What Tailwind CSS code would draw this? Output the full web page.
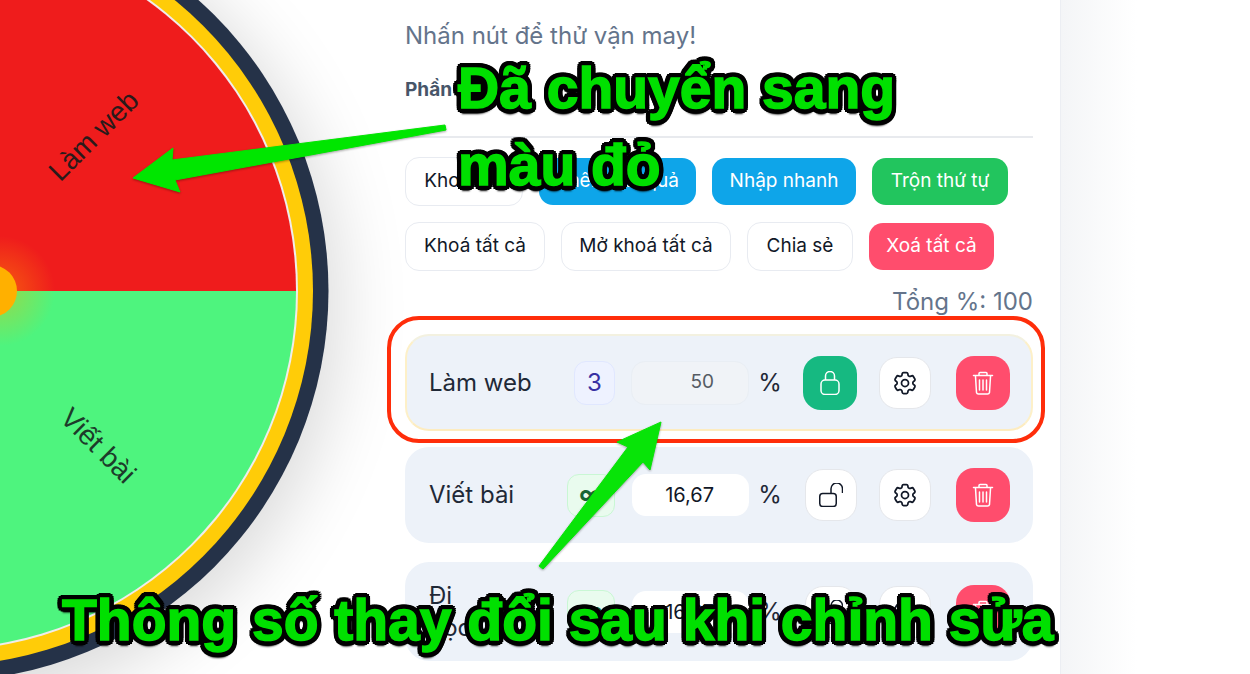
<!DOCTYPE html>
<html lang="vi">
<head>
<meta charset="UTF-8">
<title>Vòng quay may mắn</title>
<script src="https://cdn.jsdelivr.net/npm/@tailwindcss/browser@4"></script>
</head>
<body class="bg-white font-['Inter',sans-serif]">
<div class="relative h-[674px] w-[1250px] overflow-hidden flex bg-white">

  <!-- wheel, cropped by the left edge -->
  <div class="relative w-[405px] shrink-0">
    <div class="absolute left-[-451px] top-[-98px] w-[778px] h-[778px] rounded-full shadow-[0_15px_70px_12px_rgba(0,0,0,0.15)]"></div>
    <svg class="absolute left-0 top-0" width="405" height="674" viewBox="0 0 405 674">
      <defs>
        <radialGradient id="glow" cx="0" cy="291" r="55" gradientUnits="userSpaceOnUse">
          <stop offset="0.3" stop-color="#ffb300" stop-opacity="0.3"/>
          <stop offset="1" stop-color="#ffb300" stop-opacity="0"/>
        </radialGradient>
      </defs>
      <circle cx="-62" cy="291" r="390.5" fill="#253248"/>
      <circle cx="-62" cy="291" r="375" fill="#ffcc08"/>
      <circle cx="-62" cy="291" r="360" fill="#f0ecec"/>
      <path d="M-62 291 L296 291 A358 358 0 0 0 -62 -67 Z" fill="#ef1c1c"/>
      <path d="M-62 291 L296 291 A358 358 0 0 1 -62 649 Z" fill="#4ef47e"/>
      <circle cx="0" cy="291" r="55" fill="url(#glow)"/>
      <circle cx="-9" cy="291" r="26" fill="#ffb000"/>
    </svg>
    <span class="absolute left-[94px] top-[136px] -translate-x-1/2 -translate-y-1/2 -rotate-45 text-[28px] text-[#2a1a1a] font-['Liberation_Sans',sans-serif] whitespace-nowrap">Làm web</span>
    <span class="absolute left-[98px] top-[446px] -translate-x-1/2 -translate-y-1/2 rotate-45 text-[28px] text-[#1d3b2a] font-['Liberation_Sans',sans-serif] whitespace-nowrap">Viết bài</span>
  </div>

  <!-- settings panel -->
  <div class="w-[656px] shrink-0 pr-[27px] pt-[21px] border-r border-[#eceef3]">
    <p class="text-[24px] leading-[30px] text-[#64748b]">Nhấn nút để thử vận may!</p>
    <div class="mt-[29px] pb-[36px] border-b-2 border-[#e8eaee]">
      <p class="text-[19px] leading-[20px] font-bold text-[#475569]">Phần thưởng</p>
    </div>

    <div class="mt-[19px] flex flex-wrap items-center gap-x-4 gap-y-4">
      <button class="h-[49px] w-[118px] rounded-[14px] bg-white border border-[#e8ebf1] text-[19px] text-[#111827]">Kho mẫu</button>
      <button class="h-[47px] w-[157px] rounded-[14px] bg-[#0ea5e9] text-[19px] text-white">Thêm kết quả</button>
      <button class="h-[47px] w-[144px] rounded-[14px] bg-[#0ea5e9] text-[19px] text-white">Nhập nhanh</button>
      <button class="h-[47px] w-[136px] rounded-[14px] bg-[#22c55e] text-[19px] text-white">Trộn thứ tự</button>
      <button class="h-[49px] w-[140px] rounded-[14px] bg-white border border-[#e8ebf1] text-[19px] text-[#111827]">Khoá tất cả</button>
      <button class="h-[49px] w-[170px] rounded-[14px] bg-white border border-[#e8ebf1] text-[19px] text-[#111827]">Mở khoá tất cả</button>
      <button class="h-[49px] w-[106px] rounded-[14px] bg-white border border-[#e8ebf1] text-[19px] text-[#111827]">Chia sẻ</button>
      <button class="h-[47px] w-[125px] rounded-[14px] bg-[#ff4d6d] text-[19px] text-white">Xoá tất cả</button>
    </div>

    <p class="mt-[16px] text-right text-[24px] leading-[30px] text-[#64748b]">Tổng %: 100</p>

    <!-- rows -->
    <div class="mt-[17px] h-[97px] rounded-[24px] bg-[#edf2f9] border-2 border-t-[#f3f1e0] border-x-[#fdf0c8] border-b-[#fdecc0] flex items-center pl-[22px]">
      <span class="w-[145px] text-[24px] text-[#1f2937]">Làm web</span>
      <span class="w-[41px] h-[44px] mr-[16px] rounded-[12px] bg-[#eef2ff] border border-[#e0e7ff] text-[#3730a3] text-[24px] flex items-center justify-center">3</span>
      <span class="w-[118px] h-[44px] rounded-[14px] bg-[#f0f3f7] border border-[#e9eef4] text-[#555b63] text-[19px] flex items-center justify-end pr-[34px]">50</span>
      <span class="w-[42px] text-center text-[24px] text-[#1f2937]">%</span>
      <button class="ml-[12px] w-[54px] h-[54px] rounded-[18px] bg-[#16b981] flex items-center justify-center">
        <svg class="w-[24px] h-[24px]" fill="none" viewBox="0 0 24 24" stroke="#fff" stroke-width="1.5"><path d="M7.5 9V5a4.5 4.5 0 0 1 9 0v4"/><rect x="3" y="9" width="18" height="14.5" rx="4"/></svg>
      </button>
      <button class="ml-[22px] w-[52px] h-[52px] rounded-[18px] bg-white border border-[#e5e7eb] flex items-center justify-center">
        <svg class="w-[28px] h-[28px]" fill="none" viewBox="0 0 24 24" stroke="#111827" stroke-width="1.5"><path stroke-linecap="round" stroke-linejoin="round" d="M9.594 3.94c.09-.542.56-.94 1.11-.94h2.593c.55 0 1.02.398 1.11.94l.213 1.281c.063.374.313.686.645.87.074.04.147.083.22.127.325.196.72.257 1.075.124l1.217-.456a1.125 1.125 0 0 1 1.37.49l1.296 2.247a1.125 1.125 0 0 1-.26 1.431l-1.003.827c-.293.241-.438.613-.43.992a7.723 7.723 0 0 1 0 .255c-.008.378.137.75.43.991l1.004.827c.424.35.534.955.26 1.43l-1.298 2.247a1.125 1.125 0 0 1-1.369.491l-1.217-.456c-.355-.133-.75-.072-1.076.124a6.47 6.47 0 0 1-.22.128c-.331.183-.581.495-.644.869l-.213 1.281c-.09.543-.56.94-1.11.94h-2.594c-.55 0-1.019-.398-1.11-.94l-.213-1.281c-.062-.374-.312-.686-.644-.87a6.52 6.52 0 0 1-.22-.127c-.325-.196-.72-.257-1.076-.124l-1.217.456a1.125 1.125 0 0 1-1.369-.49l-1.297-2.247a1.125 1.125 0 0 1 .26-1.431l1.004-.827c.292-.24.437-.613.43-.991a6.932 6.932 0 0 1 0-.255c.007-.38-.138-.751-.43-.992l-1.004-.827a1.125 1.125 0 0 1-.26-1.43l1.297-2.247a1.125 1.125 0 0 1 1.37-.491l1.216.456c.356.133.751.072 1.076-.124.072-.044.146-.086.22-.128.332-.183.582-.495.644-.869l.214-1.28Z"/><path stroke-linecap="round" stroke-linejoin="round" d="M15 12a3 3 0 1 1-6 0 3 3 0 0 1 6 0Z"/></svg>
      </button>
      <button class="ml-[25px] w-[54px] h-[54px] rounded-[18px] bg-[#ff4d6d] flex items-center justify-center">
        <svg class="w-[24px] h-[24px]" fill="none" viewBox="0 0 24 24" stroke="#fff" stroke-width="1.5" stroke-linecap="round"><path d="M2.5 4.5h19M8 4V2.5a1 1 0 0 1 1-1h6a1 1 0 0 1 1 1V4M4.5 5.5l1 16a2 2 0 0 0 2 1.5h9a2 2 0 0 0 2-1.5l1-16M8.5 9v10M12 9v10M15.5 9v10"/></svg>
      </button>
    </div>

    <div class="mt-[16px] h-[96px] rounded-[24px] bg-[#edf2f9] flex items-center pl-[24px]">
      <span class="w-[138px] text-[24px] text-[#1f2937]">Viết bài</span>
      <span class="w-[48px] h-[43px] mr-[17px] rounded-[12px] bg-[#e9fbee] border border-[#c9f7d4] text-[#166534] text-[24px] font-bold flex items-center justify-center">∞</span>
      <span class="w-[117px] h-[42px] rounded-[14px] bg-white text-[#111827] text-[20px] flex items-center justify-end pr-[35px]">16,67</span>
      <span class="w-[42px] text-center text-[24px] text-[#1f2937]">%</span>
      <button class="ml-[14px] w-[52px] h-[52px] rounded-[18px] bg-white border border-[#e5e7eb] flex items-center justify-center">
        <svg class="w-[24px] h-[24px]" fill="none" viewBox="0 0 24 24" stroke="#111827" stroke-width="1.5"><path d="M12 10.5V5.75a5.75 5.75 0 0 1 11.5 0V10"/><rect x="0.75" y="10.5" width="16.5" height="13" rx="3"/></svg>
      </button>
      <button class="ml-[22px] w-[52px] h-[52px] rounded-[18px] bg-white border border-[#e5e7eb] flex items-center justify-center">
        <svg class="w-[28px] h-[28px]" fill="none" viewBox="0 0 24 24" stroke="#111827" stroke-width="1.5"><path stroke-linecap="round" stroke-linejoin="round" d="M9.594 3.94c.09-.542.56-.94 1.11-.94h2.593c.55 0 1.02.398 1.11.94l.213 1.281c.063.374.313.686.645.87.074.04.147.083.22.127.325.196.72.257 1.075.124l1.217-.456a1.125 1.125 0 0 1 1.37.49l1.296 2.247a1.125 1.125 0 0 1-.26 1.431l-1.003.827c-.293.241-.438.613-.43.992a7.723 7.723 0 0 1 0 .255c-.008.378.137.75.43.991l1.004.827c.424.35.534.955.26 1.43l-1.298 2.247a1.125 1.125 0 0 1-1.369.491l-1.217-.456c-.355-.133-.75-.072-1.076.124a6.47 6.47 0 0 1-.22.128c-.331.183-.581.495-.644.869l-.213 1.281c-.09.543-.56.94-1.11.94h-2.594c-.55 0-1.019-.398-1.11-.94l-.213-1.281c-.062-.374-.312-.686-.644-.87a6.52 6.52 0 0 1-.22-.127c-.325-.196-.72-.257-1.076-.124l-1.217.456a1.125 1.125 0 0 1-1.369-.49l-1.297-2.247a1.125 1.125 0 0 1 .26-1.431l1.004-.827c.292-.24.437-.613.43-.991a6.932 6.932 0 0 1 0-.255c.007-.38-.138-.751-.43-.992l-1.004-.827a1.125 1.125 0 0 1-.26-1.43l1.297-2.247a1.125 1.125 0 0 1 1.37-.491l1.216.456c.356.133.751.072 1.076-.124.072-.044.146-.086.22-.128.332-.183.582-.495.644-.869l.214-1.28Z"/><path stroke-linecap="round" stroke-linejoin="round" d="M15 12a3 3 0 1 1-6 0 3 3 0 0 1 6 0Z"/></svg>
      </button>
      <button class="ml-[25px] w-[54px] h-[54px] rounded-[18px] bg-[#ff4d6d] flex items-center justify-center">
        <svg class="w-[24px] h-[24px]" fill="none" viewBox="0 0 24 24" stroke="#fff" stroke-width="1.5" stroke-linecap="round"><path d="M2.5 4.5h19M8 4V2.5a1 1 0 0 1 1-1h6a1 1 0 0 1 1 1V4M4.5 5.5l1 16a2 2 0 0 0 2 1.5h9a2 2 0 0 0 2-1.5l1-16M8.5 9v10M12 9v10M15.5 9v10"/></svg>
      </button>
    </div>

    <div class="mt-[19px] h-[99px] rounded-[24px] bg-[#edf2f9] flex items-center pl-[24px]">
      <span class="w-[138px] text-[24px] leading-[32px] text-[#1f2937]">Đi<br>học</span>
      <span class="w-[48px] h-[43px] mr-[17px] rounded-[12px] bg-[#e9fbee] border border-[#c9f7d4] text-[#166534] text-[24px] font-bold flex items-center justify-center">∞</span>
      <span class="w-[117px] h-[42px] rounded-[14px] bg-white text-[#111827] text-[20px] flex items-center justify-end pr-[35px]">16,67</span>
      <span class="w-[42px] text-center text-[24px] text-[#1f2937]">%</span>
      <button class="ml-[14px] w-[52px] h-[52px] rounded-[18px] bg-white border border-[#e5e7eb] flex items-center justify-center">
        <svg class="w-[24px] h-[24px]" fill="none" viewBox="0 0 24 24" stroke="#111827" stroke-width="1.5"><path d="M12 10.5V5.75a5.75 5.75 0 0 1 11.5 0V10"/><rect x="0.75" y="10.5" width="16.5" height="13" rx="3"/></svg>
      </button>
      <button class="ml-[22px] w-[52px] h-[52px] rounded-[18px] bg-white border border-[#e5e7eb] flex items-center justify-center">
        <svg class="w-[28px] h-[28px]" fill="none" viewBox="0 0 24 24" stroke="#111827" stroke-width="1.5"><path stroke-linecap="round" stroke-linejoin="round" d="M9.594 3.94c.09-.542.56-.94 1.11-.94h2.593c.55 0 1.02.398 1.11.94l.213 1.281c.063.374.313.686.645.87.074.04.147.083.22.127.325.196.72.257 1.075.124l1.217-.456a1.125 1.125 0 0 1 1.37.49l1.296 2.247a1.125 1.125 0 0 1-.26 1.431l-1.003.827c-.293.241-.438.613-.43.992a7.723 7.723 0 0 1 0 .255c-.008.378.137.75.43.991l1.004.827c.424.35.534.955.26 1.43l-1.298 2.247a1.125 1.125 0 0 1-1.369.491l-1.217-.456c-.355-.133-.75-.072-1.076.124a6.47 6.47 0 0 1-.22.128c-.331.183-.581.495-.644.869l-.213 1.281c-.09.543-.56.94-1.11.94h-2.594c-.55 0-1.019-.398-1.11-.94l-.213-1.281c-.062-.374-.312-.686-.644-.87a6.52 6.52 0 0 1-.22-.127c-.325-.196-.72-.257-1.076-.124l-1.217.456a1.125 1.125 0 0 1-1.369-.49l-1.297-2.247a1.125 1.125 0 0 1 .26-1.431l1.004-.827c.292-.24.437-.613.43-.991a6.932 6.932 0 0 1 0-.255c.007-.38-.138-.751-.43-.992l-1.004-.827a1.125 1.125 0 0 1-.26-1.43l1.297-2.247a1.125 1.125 0 0 1 1.37-.491l1.216.456c.356.133.751.072 1.076-.124.072-.044.146-.086.22-.128.332-.183.582-.495.644-.869l.214-1.28Z"/><path stroke-linecap="round" stroke-linejoin="round" d="M15 12a3 3 0 1 1-6 0 3 3 0 0 1 6 0Z"/></svg>
      </button>
      <button class="ml-[25px] w-[54px] h-[54px] rounded-[18px] bg-[#ff4d6d] flex items-center justify-center">
        <svg class="w-[24px] h-[24px]" fill="none" viewBox="0 0 24 24" stroke="#fff" stroke-width="1.5" stroke-linecap="round"><path d="M2.5 4.5h19M8 4V2.5a1 1 0 0 1 1-1h6a1 1 0 0 1 1 1V4M4.5 5.5l1 16a2 2 0 0 0 2 1.5h9a2 2 0 0 0 2-1.5l1-16M8.5 9v10M12 9v10M15.5 9v10"/></svg>
      </button>
    </div>
  </div>

  <div class="flex-1 bg-linear-to-r from-[#f4f5f7] to-white to-40%"></div>

  <!-- annotations drawn on top of the screenshot -->
  <div class="absolute left-[387px] top-[316px] w-[658px] h-[127px] rounded-[32px] border-4 border-[#ff2d0a]"></div>
  <svg class="absolute left-0 top-0 pointer-events-none drop-shadow-[0_1px_1px_rgba(0,0,0,0.35)]" width="1250" height="674" viewBox="0 0 1250 674">
    <polygon points="445,125 446,130 175,180 180,192 133,178 173,148 172,160" fill="#00e600" stroke="#00e600" stroke-linejoin="round"/>
    <polygon points="539,566 543,569 643,462 650,470 661,422 617,442 628,447" fill="#08e408" stroke="#08e408" stroke-linejoin="round"/>
  </svg>
  <div class="absolute left-[458px] top-[50px] text-[57px] leading-[77px] font-bold text-[#00e000] font-['Liberation_Sans',sans-serif] whitespace-nowrap [-webkit-text-stroke:1.5px_#00e000] [text-shadow:5px_0_0_#000,-5px_0_0_#000,0_5px_0_#000,0_-5px_0_#000,4px_4px_0_#000,-4px_4px_0_#000,4px_-4px_0_#000,-4px_-4px_0_#000,2px_5px_0_#000,-2px_5px_0_#000,2px_-5px_0_#000,-2px_-5px_0_#000,5px_2px_0_#000,-5px_2px_0_#000,5px_-2px_0_#000,-5px_-2px_0_#000,0_6px_2px_#000]">Đã chuyển sang<br>màu đỏ</div>
  <div class="absolute left-[62px] top-[585px] text-[57px] leading-[70px] font-bold text-[#00e000] font-['Liberation_Sans',sans-serif] whitespace-nowrap [-webkit-text-stroke:1.5px_#00e000] [text-shadow:5px_0_0_#000,-5px_0_0_#000,0_5px_0_#000,0_-5px_0_#000,4px_4px_0_#000,-4px_4px_0_#000,4px_-4px_0_#000,-4px_-4px_0_#000,2px_5px_0_#000,-2px_5px_0_#000,2px_-5px_0_#000,-2px_-5px_0_#000,5px_2px_0_#000,-5px_2px_0_#000,5px_-2px_0_#000,-5px_-2px_0_#000,0_6px_2px_#000]">Thông số thay đổi sau khi chỉnh sửa</div>
</div>
</body>
</html>
